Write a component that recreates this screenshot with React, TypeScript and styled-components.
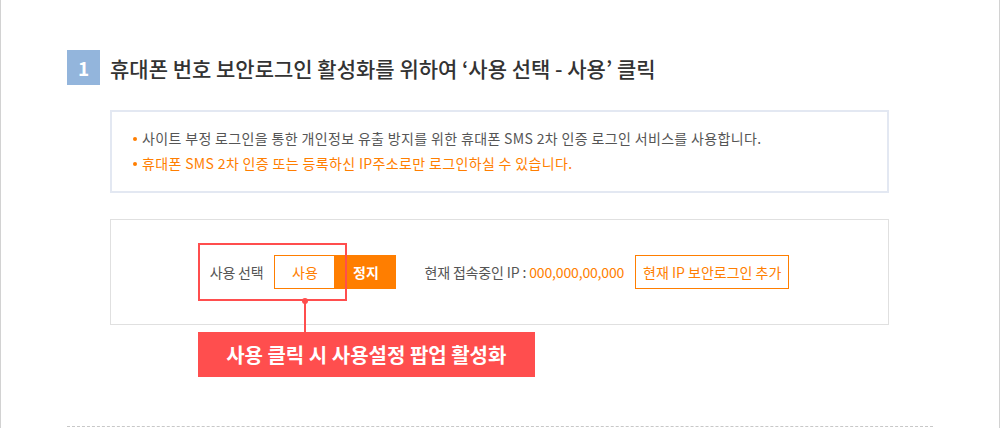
import React from 'react';
import styled, { createGlobalStyle } from 'styled-components';

const GlobalStyle = createGlobalStyle`
  html, body {
    margin: 0;
    padding: 0;
    background: #fff;
  }
  body {
    font-family: "Noto Sans CJK KR", "Noto Sans", sans-serif;
    color: #555;
  }
  * {
    box-sizing: border-box;
  }
`;

const ORANGE = '#ff7e00';
const RED = '#ff4e4e';

const Page = styled.div`
  width: 1000px;
  height: 428px;
  border-left: 1px solid #d2d2d2;
  border-right: 1px solid #d2d2d2;
  overflow: hidden;
`;

const Section = styled.section`
  padding: 50px 0 0 66px;
`;

const Heading = styled.h2`
  display: flex;
  align-items: center;
  gap: 10px;
  margin: 0;
  height: 35px;
  font-size: 21px;
  font-weight: 500;
  color: #333;
`;

const Badge = styled.span`
  display: flex;
  align-items: center;
  justify-content: center;
  width: 33px;
  height: 35px;
  background: #93b5dc;
  color: #fff;
  font-size: 19px;
  font-weight: 700;
`;

const Body = styled.div`
  margin-left: 43px;
  width: 779px;
`;

const InfoBox = styled.ul`
  margin: 25px 0 0;
  padding: 14px 20px 15px 21px;
  height: 83px;
  border: 2px solid #e3e8f2;
  list-style: none;
  font-size: 14px;
  line-height: 25px;
  letter-spacing: 0.35px;
`;

const InfoItem = styled.li<{ $accent?: boolean }>`
  display: flex;
  align-items: center;
  color: ${(p) => (p.$accent ? ORANGE : '#555')};

  &::before {
    content: '';
    width: 4px;
    height: 4px;
    border-radius: 50%;
    background: ${ORANGE};
    margin-right: 5px;
    flex: none;
  }
`;

const ControlBox = styled.div`
  margin-top: 26px;
  height: 106px;
  border: 1px solid #e0e0e0;
  display: flex;
  align-items: center;
  justify-content: center;
  font-size: 14px;
  color: #555;
`;

const Row = styled.div`
  display: flex;
  align-items: center;
`;

const Group = styled.div`
  position: relative;
  display: flex;
  align-items: center;
`;

const Label = styled.span`
  margin-right: 11px;
  letter-spacing: -0.2px;
`;

const ToggleButton = styled.button<{ $on?: boolean }>`
  width: 61px;
  height: 34px;
  border: 1px solid ${ORANGE};
  background: ${(p) => (p.$on ? ORANGE : '#fff')};
  color: ${(p) => (p.$on ? '#fff' : ORANGE)};
  font-family: inherit;
  font-size: 14px;
  font-weight: ${(p) => (p.$on ? 700 : 400)};
  padding: 0;
  cursor: pointer;
`;

const IpInfo = styled.span`
  margin-left: 28px;
  margin-right: 11px;
  letter-spacing: -0.15px;
`;

const IpValue = styled.span`
  color: ${ORANGE};
`;

const AddButton = styled.button`
  width: 154px;
  height: 34px;
  padding: 0;
  border: 1px solid ${ORANGE};
  background: #fff;
  color: ${ORANGE};
  font-family: inherit;
  font-size: 14px;
  cursor: pointer;
`;

const Highlight = styled.div`
  position: absolute;
  top: -12px;
  left: -12px;
  right: -12px;
  bottom: -12px;
  border: 2px solid ${RED};
  pointer-events: none;
`;

const Connector = styled.div`
  position: absolute;
  right: 29px;
  top: 46px;
  width: 2px;
  height: 31px;
  background: ${RED};

  &::before {
    content: '';
    position: absolute;
    left: -2px;
    top: -3px;
    width: 6px;
    height: 6px;
    border-radius: 50%;
    background: ${RED};
  }
`;

const Callout = styled.div`
  position: absolute;
  left: -12px;
  top: 77px;
  width: 337px;
  height: 45px;
  display: flex;
  align-items: center;
  justify-content: center;
  background: ${RED};
  color: #fff;
  font-size: 20px;
  font-weight: 700;
  white-space: nowrap;
`;

const Divider = styled.hr`
  margin: 101px 0 0;
  width: 866px;
  border: 0;
  border-top: 1px dashed #c8c8c8;
`;

export default function App(): JSX.Element {
  return (
    <>
      <GlobalStyle />
      <Page>
        <Section>
          <Heading>
            <Badge>1</Badge>
            휴대폰 번호 보안로그인 활성화를 위하여 ‘사용 선택 - 사용’ 클릭
          </Heading>
          <Body>
            <InfoBox>
              <InfoItem>사이트 부정 로그인을 통한 개인정보 유출 방지를 위한 휴대폰 SMS 2차 인증 로그인 서비스를 사용합니다.</InfoItem>
              <InfoItem $accent>휴대폰 SMS 2차 인증 또는 등록하신 IP주소로만 로그인하실 수 있습니다.</InfoItem>
            </InfoBox>
            <ControlBox>
              <Row>
                <Group>
                  <Label>사용 선택</Label>
                  <ToggleButton>사용</ToggleButton>
                  <Highlight />
                  <Connector />
                  <Callout>사용 클릭 시 사용설정 팝업 활성화</Callout>
                </Group>
                <ToggleButton $on>정지</ToggleButton>
                <IpInfo>
                  현재 접속중인 IP : <IpValue>000,000,00,000</IpValue>
                </IpInfo>
                <AddButton>현재 IP 보안로그인 추가</AddButton>
              </Row>
            </ControlBox>
          </Body>
          <Divider />
        </Section>
      </Page>
    </>
  );
}
